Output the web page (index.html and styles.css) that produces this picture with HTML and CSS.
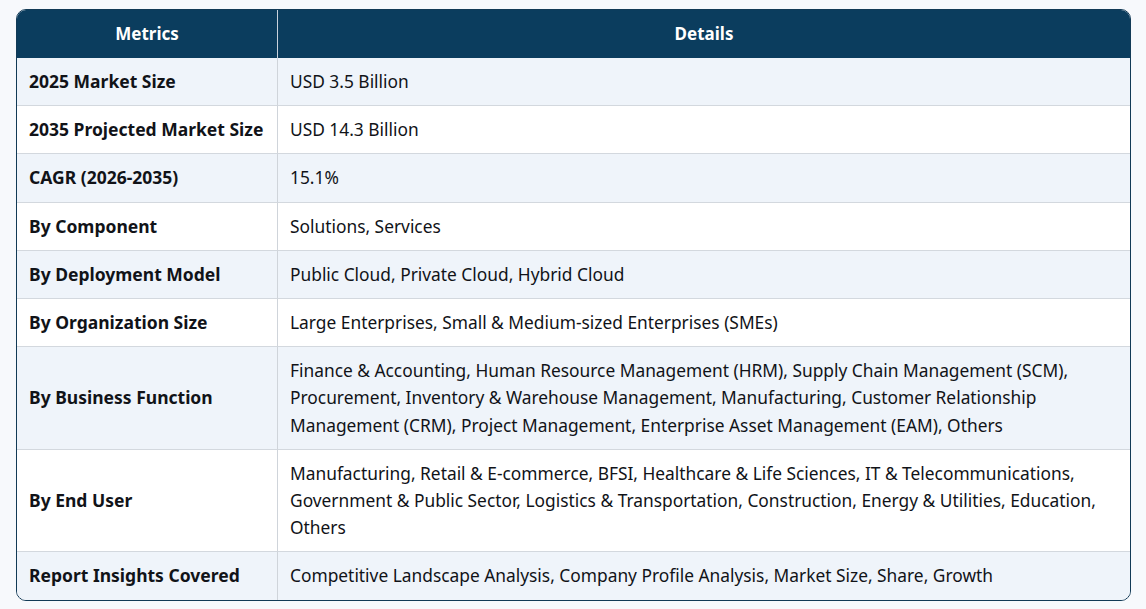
FILE: index.html
```html
<!DOCTYPE html>
<html lang="en">
<head>
<meta charset="utf-8">
<title>Market Metrics</title>
<link rel="stylesheet" href="styles.css">
</head>
<body>
<div class="wrap">
  <table class="metrics">
    <thead>
      <tr><th class="c1">Metrics</th><th>Details</th></tr>
    </thead>
    <tbody>
      <tr><td class="c1">2025 Market Size</td><td>USD 3.5 Billion</td></tr>
      <tr><td class="c1">2035 Projected Market Size</td><td>USD 14.3 Billion</td></tr>
      <tr><td class="c1">CAGR (2026-2035)</td><td>15.1%</td></tr>
      <tr><td class="c1">By Component</td><td>Solutions, Services</td></tr>
      <tr><td class="c1">By Deployment Model</td><td>Public Cloud, Private Cloud, Hybrid Cloud</td></tr>
      <tr><td class="c1">By Organization Size</td><td>Large Enterprises, Small &amp; Medium-sized Enterprises (SMEs)</td></tr>
      <tr><td class="c1">By Business Function</td><td>Finance &amp; Accounting, Human Resource Management (HRM), Supply Chain Management (SCM), Procurement, Inventory &amp; Warehouse Management, Manufacturing, Customer Relationship Management (CRM), Project Management, Enterprise Asset Management (EAM), Others</td></tr>
      <tr><td class="c1">By End User</td><td>Manufacturing, Retail &amp; E-commerce, BFSI, Healthcare &amp; Life Sciences, IT &amp; Telecommunications, Government &amp; Public Sector, Logistics &amp; Transportation, Construction, Energy &amp; Utilities, Education, Others</td></tr>
      <tr><td class="c1">Report Insights Covered</td><td>Competitive Landscape Analysis, Company Profile Analysis, Market Size, Share, Growth</td></tr>
    </tbody>
  </table>
</div>
</body>
</html>
```
FILE: styles.css
```css
html, body {
  margin: 0;
  padding: 0;
  background: #f7f9fc;
}
body {
  font-family: "Noto Sans", "Open Sans", sans-serif;
  color: #111318;
}
.wrap {
  padding: 9px 15px 9px 16px;
}
.metrics {
  width: 100%;
  table-layout: fixed;
  border-collapse: separate;
  border-spacing: 0;
  border: 1px solid #123a56;
  border-radius: 10px;
  overflow: hidden;
  font-size: 17.35px;
  line-height: 27.2px;
}
.metrics th {
  background: #0b3d5e;
  color: #ffffff;
  font-size: 17px;
  font-weight: 700;
  text-align: center;
  height: 48px;
  padding: 0 12px;
  box-sizing: border-box;
}
.metrics th.c1 {
  width: 261px;
  border-right: 1px solid #c9d2dc;
}
.metrics td {
  padding: 10px 12px;
  border-top: 1px solid #d3d8de;
  vertical-align: middle;
  text-align: left;
}
.metrics td.c1 {
  font-size: 17.5px;
  font-weight: 700;
  white-space: nowrap;
  border-right: 1px solid #cfd4da;
}
.metrics tbody tr:first-child td {
  border-top: none;
}
.metrics tbody tr:nth-child(odd) td {
  background: #eff4fa;
}
.metrics tbody tr:nth-child(even) td {
  background: #ffffff;
}
```
